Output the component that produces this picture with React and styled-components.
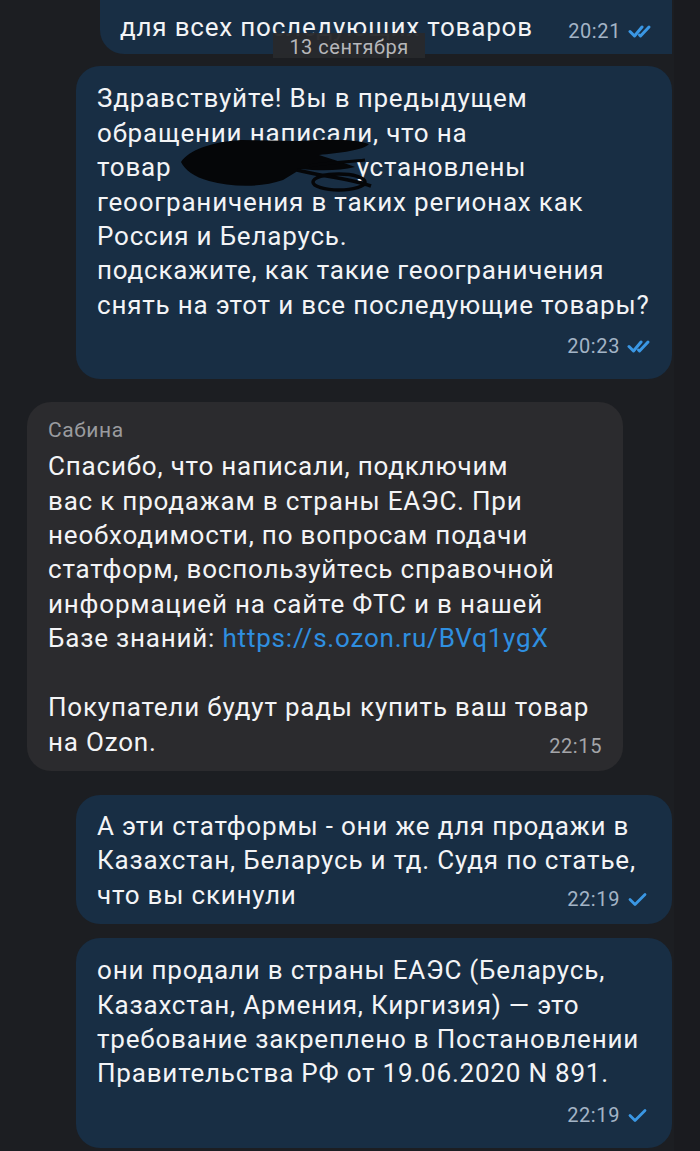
import React from 'react';
import styled, { createGlobalStyle } from 'styled-components';

const GlobalStyle = createGlobalStyle`
  html, body {
    margin: 0;
    padding: 0;
    background: #1c1e22;
  }
  body {
    font-family: Roboto, "Noto Sans", "DejaVu Sans", sans-serif;
    -webkit-font-smoothing: antialiased;
  }
`;

const Screen = styled.main`
  position: relative;
  width: 700px;
  height: 1151px;
  overflow: hidden;
  background: linear-gradient(to right, #1c1e22 0, #1c1e22 674px, #1a1b1f 674px);
  display: flex;
  flex-direction: column;
`;

const Bubble = styled.div`
  box-sizing: border-box;
  margin-left: ${(p) => (p.$out ? '76px' : '27px')};
  width: 596px;
  margin-top: ${(p) => p.$gap || 0}px;
  padding: ${(p) => (p.$tight ? '14px 21px 13px' : '15px 21px 21px')};
  background: ${(p) => (p.$out ? '#182e44' : '#2b2b2e')};
  border-radius: 24px;
  color: #f3f4f6;
  display: flex;
  flex-direction: column;
`;

const TopBubble = styled(Bubble)`
  margin-left: 100px;
  width: 572px;
  margin-top: -40px;
  padding: 50px 20px 11px;
  border-radius: 0 0 0 24px;
`;

const Sender = styled.div`
  font-size: 21px;
  line-height: 26px;
  letter-spacing: 0.6px;
  color: #9a9b9f;
  margin-top: 1px;
  margin-bottom: 6px;
`;

const Text = styled.div`
  font-size: 26px;
  line-height: 34.4px;
  letter-spacing: 0.8px;
  white-space: nowrap;
`;

const Link = styled.span`
  color: #2f8fe0;
`;

const Meta = styled.div`
  display: flex;
  align-items: center;
  justify-content: flex-end;
  gap: 7px;
  height: 24px;
  margin-top: ${(p) => (p.$inline ? '-25px' : '12px')};
  margin-right: ${(p) => (p.$incoming ? '0' : '-2px')};
`;

const Time = styled.span`
  font-size: 20px;
  letter-spacing: 0.6px;
  color: ${(p) => (p.$incoming ? '#a4a5a9' : '#a3b4c6')};
`;

const DatePill = styled.div`
  position: absolute;
  top: 33px;
  left: 273px;
  width: 152px;
  height: 25px;
  background: rgba(40, 41, 44, 0.97);
  color: #b6b7ba;
  font-size: 20px;
  letter-spacing: 0.5px;
  display: flex;
  align-items: center;
  justify-content: center;
  padding-top: 2px;
  box-sizing: border-box;
`;

const Redact = styled.span`
  position: relative;
  display: inline-block;
  width: 178px;
  height: 20px;
`;

const Scribble = styled.svg`
  position: absolute;
  left: 0;
  top: -20px;
`;

const Checks = ({ double }) => (
  <svg width="26" height="16" viewBox="0 0 26 16" fill="none">
    {double ? (
      <>
        <path d="M2 8.5 L6.5 13 L14 4" stroke="#3a97e4" strokeWidth="3" strokeLinecap="round" strokeLinejoin="round" />
        <path d="M11.5 12 L12.5 13 L21 4" stroke="#3a97e4" strokeWidth="3" strokeLinecap="round" strokeLinejoin="round" />
      </>
    ) : (
      <path d="M3 8.5 L8 13.5 L18 3.5" stroke="#3a97e4" strokeWidth="2.8" strokeLinecap="round" strokeLinejoin="round" />
    )}
  </svg>
);

const Hidden = () => (
  <Redact>
    <Scribble width="194" height="58" viewBox="0 0 194 58">
      <path
        d="M2 26 C10 14 32 6 62 4 L120 5 C150 3 176 3 190 8 C186 14 160 17 140 19 C152 23 166 27 176 31 C160 35 140 35 122 33 L104 44 C82 52 52 51 30 45 C15 41 6 34 2 26 Z"
        fill="#050608"
      />
      <ellipse cx="160" cy="46" rx="26" ry="8" stroke="#050608" strokeWidth="3.5" fill="none" />
      <path d="M118 34 C140 40 170 42 192 50" stroke="#050608" strokeWidth="3.5" fill="none" />
      <path d="M130 30 C150 26 170 26 186 24" stroke="#050608" strokeWidth="3" fill="none" />
    </Scribble>
  </Redact>
);

const App = () => (
  <Screen>
    <GlobalStyle />
    <TopBubble $out>
      <Text>для всех последующих товаров</Text>
      <Meta $inline>
        <Time>20:21</Time>
        <Checks double />
      </Meta>
    </TopBubble>

    <Bubble $out $gap={12}>
      <Text>
        Здравствуйте! Вы в предыдущем<br />
        обращении написали, что на<br />
        товар <Hidden />установлены<br />
        геоограничения в таких регионах как<br />
        Россия и Беларусь.<br />
        подскажите, как такие геоограничения<br />
        снять на этот и все последующие товары?
      </Text>
      <Meta>
        <Time>20:23</Time>
        <Checks double />
      </Meta>
    </Bubble>

    <Bubble $gap={23} $tight>
      <Sender>Сабина</Sender>
      <Text>
        Спасибо, что написали, подключим<br />
        вас к продажам в страны ЕАЭС. При<br />
        необходимости, по вопросам подачи<br />
        статформ, воспользуйтесь справочной<br />
        информацией на сайте ФТС и в нашей<br />
        Базе знаний: <Link>https://s.ozon.ru/BVq1ygX</Link><br />
        <br />
        Покупатели будут рады купить ваш товар<br />
        на Ozon.
      </Text>
      <Meta $inline $incoming>
        <Time $incoming>22:15</Time>
      </Meta>
    </Bubble>

    <Bubble $out $gap={24} $tight>
      <Text>
        А эти статформы - они же для продажи в<br />
        Казахстан, Беларусь и тд. Судя по статье,<br />
        что вы скинули
      </Text>
      <Meta $inline>
        <Time>22:19</Time>
        <Checks />
      </Meta>
    </Bubble>

    <Bubble $out $gap={14}>
      <Text>
        они продали в страны ЕАЭС (Беларусь,<br />
        Казахстан, Армения, Киргизия) — это<br />
        требование закреплено в Постановлении<br />
        Правительства РФ от 19.06.2020 N 891.
      </Text>
      <Meta>
        <Time>22:19</Time>
        <Checks />
      </Meta>
    </Bubble>

    <DatePill>13 сентября</DatePill>
  </Screen>
);

export default App;
